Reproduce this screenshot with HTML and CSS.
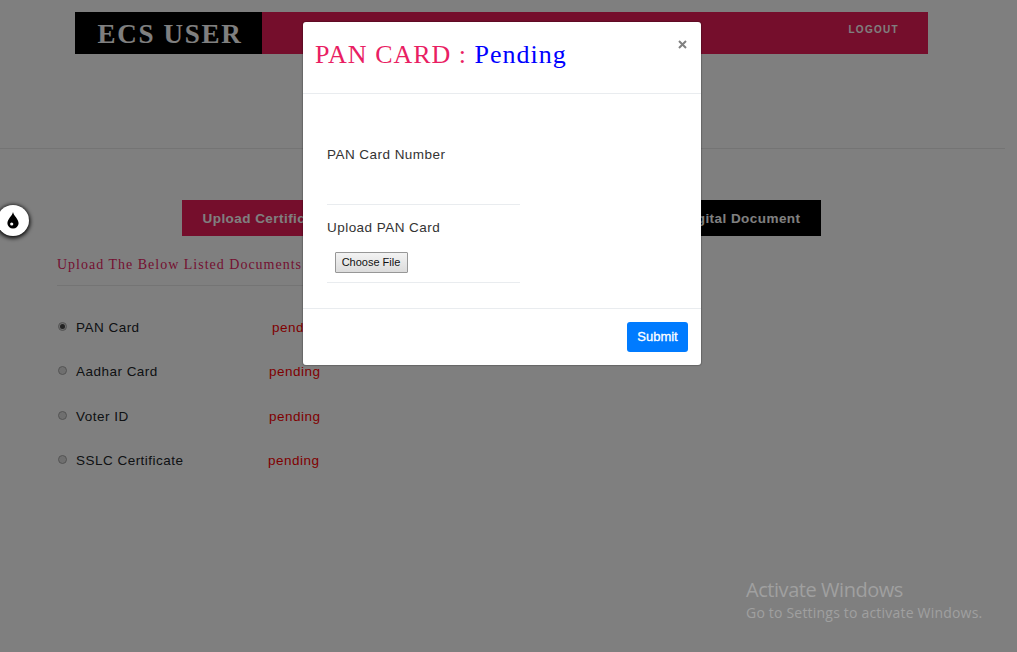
FILE: index.html
```html
<!DOCTYPE html>
<html lang="en">
<head>
<meta charset="utf-8">
<title>ECS User</title>
<link rel="stylesheet" href="styles.css">
</head>
<body>
<div class="page">
  <header class="navbar">
    <div class="brand"><span>ECS USER</span></div>
    <a class="logout">LOGOUT</a>
  </header>
  <div class="divider"></div>
  <nav class="tabs">
    <a class="tab tab-active">Upload Certificates</a>
    <a class="tab">View Digital Document</a>
  </nav>
  <main class="documents">
    <h2 class="documents-title">Upload The Below Listed Documents</h2>
    <ul class="doc-list">
      <li class="doc"><i class="radio checked"></i><span class="name">PAN Card</span><span class="status status-first">pending</span></li>
      <li class="doc"><i class="radio"></i><span class="name">Aadhar Card</span><span class="status">pending</span></li>
      <li class="doc"><i class="radio"></i><span class="name">Voter ID</span><span class="status">pending</span></li>
      <li class="doc"><i class="radio"></i><span class="name">SSLC Certificate</span><span class="status status-last">pending</span></li>
    </ul>
  </main>
</div>
<div class="overlay"></div>
<div class="ink-button">
  <svg width="12" height="17" viewBox="0 0 12 17"><path d="M6 0C5.500 3.500 .4 7 .4 11.200a5.600 5.300 0 0 0 11.200 0C11.600 7 6.500 3.500 6 0Z" fill="#000"/><circle cx="4.700" cy="12" r="1.600" fill="#fff"/></svg>
</div>
<section class="modal">
  <div class="modal-header">
    <h1 class="modal-title"><span>PAN CARD :</span> <span class="state">Pending</span></h1>
    <svg class="close" width="9" height="9" viewBox="0 0 9 9"><path d="M1 1L8 8M8 1L1 8" stroke="#808080" stroke-width="2" fill="none"/></svg>
  </div>
  <div class="modal-body">
    <div class="field field-number"><label>PAN Card Number</label></div>
    <div class="field field-upload"><label>Upload PAN Card</label><button class="choose">Choose File</button></div>
  </div>
  <div class="modal-footer"><button class="submit">Submit</button></div>
</section>
<div class="watermark">
  <div class="watermark-title">Activate Windows</div>
  <div class="watermark-text">Go to Settings to activate Windows.</div>
</div>
</body>
</html>
```
FILE: styles.css
```css
* { box-sizing: border-box; }
body {
  margin: 0;
  height: 652px;
  overflow: hidden;
  background: #fff;
  font-family: "Liberation Sans", Arial, sans-serif;
  font-size: 13.5px;
  white-space: nowrap;
}
.page { height: 652px; padding-top: 12px; }
.navbar {
  display: flex;
  justify-content: space-between;
  width: 853px;
  height: 42px;
  margin-left: 75px;
  background: #eb1c58;
}
.brand {
  width: 187px;
  padding-left: 22.5px;
  background: #000;
  color: #fff;
  font: bold 27px/44px "Liberation Serif", "Times New Roman", serif;
  letter-spacing: 1.7px;
}
.logout {
  padding-right: 29px;
  color: #fff;
  font-size: 10px;
  font-weight: bold;
  line-height: 35px;
  letter-spacing: 1.3px;
}
.divider { width: 1005px; height: 1px; margin-top: 94px; background: #e8e8e8; }
.tabs {
  display: flex;
  width: 639px;
  height: 36px;
  margin: 51px 0 0 182px;
  justify-content: space-between;
}
.tab {
  padding: 0 20.5px;
  background: #000;
  color: #fff;
  font-size: 13.5px;
  font-weight: bold;
  line-height: 38px;
  letter-spacing: .45px;
}
.tab-active { background: #eb1c58; }
.documents { width: 300px; margin-left: 57px; }
.documents-title {
  height: 50px;
  margin: 0;
  padding-top: 20px;
  border-bottom: 1px solid #e8e8e8;
  color: #e91e63;
  font: 14px/17px "Liberation Serif", "Times New Roman", serif;
  letter-spacing: 1px;
}
.doc-list { margin: 0; padding: 20px 0 0; list-style: none; }
.doc {
  display: grid;
  grid-template-columns: 19px 193px auto;
  height: 44.4px;
  line-height: 44px;
  letter-spacing: .48px;
}
.radio {
  display: grid;
  place-content: center;
  width: 9px;
  height: 9px;
  margin: 16px 0 0 1px;
  border: 1px solid #a8a8a8;
  border-radius: 50%;
  background: #dedede;
}
.checked::after {
  content: "";
  width: 5px;
  height: 5px;
  border-radius: 50%;
  background: #444;
}
.name { color: #212529; }
.status { color: #f00; }
.status-first { padding-left: 3px; }
.status-last { margin-left: -1px; }
.overlay { position: absolute; inset: 0; background: rgba(0, 0, 0, .5); }
.ink-button {
  position: absolute;
  left: -3px;
  top: 205px;
  display: grid;
  place-content: center;
  width: 32px;
  height: 31px;
  border-radius: 50%;
  background: #fff;
  box-shadow: 0 1px 4px 1px #000;
}
.ink-button svg { display: block; }
.modal {
  position: absolute;
  left: 303px;
  top: 22px;
  display: flex;
  flex-direction: column;
  width: 398px;
  height: 343px;
  border-radius: 3px;
  background: #fff;
  box-shadow: 0 0 1px 1px rgba(0, 0, 0, .2);
}
.modal-header {
  display: flex;
  justify-content: space-between;
  height: 72px;
  padding: 18px 14px 0 12px;
  border-bottom: 1px solid #e9ecef;
}
.modal-title {
  margin: 0;
  color: #e91e63;
  font: 26px/29px "Liberation Serif", "Times New Roman", serif;
  letter-spacing: 1px;
}
.state { color: #00f; }
.modal-body { height: 214px; padding: 50px 24px 0; }
.field {
  display: flex;
  flex-direction: column;
  width: 193px;
  border-bottom: 1px solid #e9ecef;
  color: #333;
  line-height: 20px;
  letter-spacing: .46px;
}
.field-number { height: 61px; padding-top: 1px; }
.field-upload { height: 78px; padding-top: 13px; }
.choose {
  width: 73px;
  height: 21px;
  margin: 14px 0 0 8px;
  padding: 0 1px 0 0;
  border: 1px solid #979797;
  border-radius: 1px;
  background: linear-gradient(#f3f3f3, #dcdcdc);
  color: #111;
  font: 11px/17px "Liberation Sans", Arial, sans-serif;
}
.modal-footer {
  display: flex;
  justify-content: flex-end;
  height: 57px;
  padding: 13px 13px 0 0;
  border-top: 1px solid #e9ecef;
}
.submit {
  width: 61px;
  height: 30px;
  padding: 0;
  border: 0;
  border-radius: 3px;
  background: #007bff;
  color: #fff;
  font: 13px/30px "Liberation Sans", Arial, sans-serif;
  -webkit-text-stroke: .3px #fff;
}
.watermark {
  position: absolute;
  left: 746px;
  top: 577px;
  color: #a0a0a0;
  font-family: "Open Sans", "Noto Sans", sans-serif;
}
.watermark-title { font-size: 20px; line-height: 26px; letter-spacing: -.45px; }
.watermark-text { font-size: 14px; line-height: 20px; letter-spacing: .2px; }
```
